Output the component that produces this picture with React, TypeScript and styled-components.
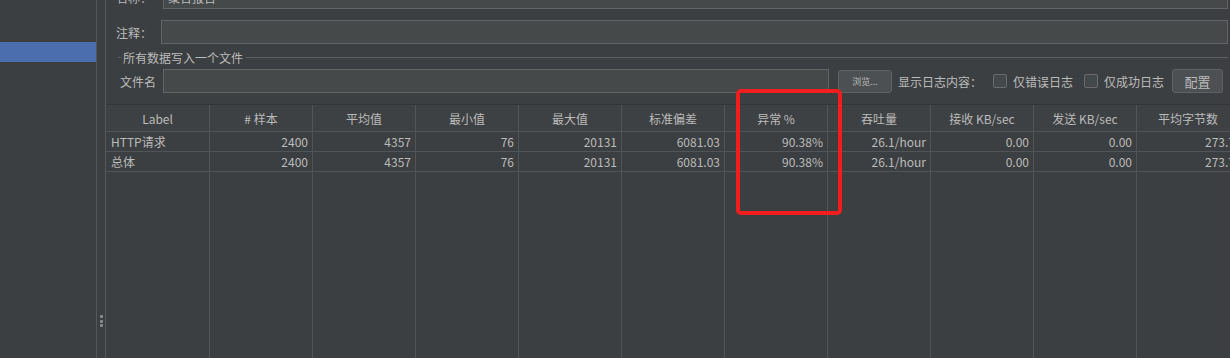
import React from "react";
import styled, { createGlobalStyle } from "styled-components";

const GlobalStyle = createGlobalStyle`
  html, body {
    margin: 0;
    padding: 0;
    background: #3c3f41;
    overflow: hidden;
  }
  * { box-sizing: border-box; }
`;

const FONT = `"Noto Sans CJK SC", "Noto Sans", sans-serif`;

const Root = styled.div`
  position: relative;
  display: flex;
  width: 1230px;
  height: 358px;
  background: #3c3f41;
  color: #bbbbbb;
  font-family: ${FONT};
  font-size: 12px;
  overflow: hidden;
`;

const Sidebar = styled.div`
  width: 97px;
  flex: none;
  border-right: 1px solid #555759;
  padding-top: 42px;
`;

const SelectedItem = styled.div`
  height: 20px;
  background: #4b6eaf;
`;

const Splitter = styled.div`
  width: 8px;
  flex: none;
  display: flex;
  flex-direction: column;
  align-items: center;
  justify-content: flex-end;
  gap: 1.5px;
  padding-bottom: 31px;
`;

const Dot = styled.span`
  width: 3px;
  height: 3px;
  background: #8c8c8c;
  border-radius: 1px;
`;

const Main = styled.div`
  flex: 1;
  min-width: 0;
  border-left: 1px solid #555759;
  display: flex;
  flex-direction: column;
  overflow: hidden;
`;

const Form = styled.div`
  display: flex;
  flex-direction: column;
  padding: 0 2px 0 10px;
`;

const FieldRow = styled.div<{ $top: number; $label: number; $pad?: number }>`
  display: flex;
  align-items: center;
  height: 24px;
  margin-top: ${(p) => p.$top}px;
  & > label {
    width: ${(p) => p.$label}px;
    padding-left: ${(p) => p.$pad ?? 0}px;
    flex: none;
    font-size: 12px;
    white-space: nowrap;
  }
`;

const TextField = styled.div<{ $width?: number }>`
  height: 24px;
  ${(p) => (p.$width ? `width: ${p.$width}px; flex: none;` : "flex: 1;")}
  background: #45494a;
  border: 1px solid #646464;
  padding: 0 4px;
  display: flex;
  align-items: center;
  font-size: 12px;
  color: #bbbbbb;
`;

const GroupTitle = styled.div`
  display: flex;
  align-items: center;
  height: 16px;
  margin-top: 5px;
  padding-left: 2px;
  font-size: 12px;
  &::before {
    content: "";
    width: 3px;
    height: 1px;
    background: #5e6163;
    margin-right: 2px;
  }
  &::after {
    content: "";
    flex: 1;
    height: 1px;
    background: #5e6163;
    margin-left: 3px;
  }
`;

const SmallButton = styled.div`
  width: 54px;
  height: 23px;
  margin-left: 9px;
  flex: none;
  background: #4c5052;
  border: 1px solid #5e6264;
  border-radius: 3px;
  display: flex;
  align-items: center;
  justify-content: center;
  font-size: 9px;
  color: #bbbbbb;
`;

const Button = styled.div`
  width: 51px;
  height: 24px;
  margin-left: auto;
  margin-right: 5px;
  flex: none;
  background: #4c5052;
  border: 1px solid #5e6264;
  border-radius: 3px;
  display: flex;
  align-items: center;
  justify-content: center;
  font-size: 13px;
  color: #bbbbbb;
`;

const InlineText = styled.span<{ $ml: number }>`
  margin-left: ${(p) => p.$ml}px;
  font-size: 12px;
  white-space: nowrap;
`;

const CheckBox = styled.span<{ $ml: number }>`
  width: 14px;
  height: 14px;
  margin-left: ${(p) => p.$ml}px;
  flex: none;
  background: #43494a;
  border: 1px solid #6b6b6b;
  border-radius: 2px;
`;

const Table = styled.div`
  margin-top: 11px;
  flex: 1;
  display: grid;
  grid-template-columns: 104px repeat(10, 103px);
  grid-template-rows: 27px 20px 20px 1fr;
  border-top: 1px solid #333537;
`;

const HeadCell = styled.div`
  display: flex;
  align-items: center;
  justify-content: center;
  background: #3e4143;
  border-right: 1px solid #515557;
  border-bottom: 1px solid #515557;
  font-size: 12px;
  white-space: nowrap;
  overflow: hidden;
`;

const Cell = styled.div<{ $left?: boolean }>`
  display: flex;
  align-items: center;
  justify-content: ${(p) => (p.$left ? "flex-start" : "flex-end")};
  padding: ${(p) => (p.$left ? "0 0 0 5px" : "0 4px 0 0")};
  border-right: 1px solid #515557;
  border-bottom: 1px solid #515557;
  font-size: 12px;
  white-space: nowrap;
  overflow: hidden;
`;

const FillCell = styled.div`
  border-right: 1px solid #515557;
`;

const Highlight = styled.div`
  position: absolute;
  left: 736px;
  top: 89px;
  width: 106px;
  height: 126px;
  border: 4px solid #f21d1d;
  border-radius: 5px;
  pointer-events: none;
`;

const headers = [
  "Label",
  "# 样本",
  "平均值",
  "最小值",
  "最大值",
  "标准偏差",
  "异常 %",
  "吞吐量",
  "接收 KB/sec",
  "发送 KB/sec",
  "平均字节数",
];

const rows = [
  ["HTTP请求", "2400", "4357", "76", "20131", "6081.03", "90.38%", "26.1/hour", "0.00", "0.00", "273.7"],
  ["总体", "2400", "4357", "76", "20131", "6081.03", "90.38%", "26.1/hour", "0.00", "0.00", "273.7"],
];

export default function App() {
  return (
    <Root>
      <GlobalStyle />
      <Sidebar>
        <SelectedItem />
      </Sidebar>
      <Splitter>
        <Dot />
        <Dot />
        <Dot />
      </Splitter>
      <Main>
        <Form>
          <FieldRow $top={-15} $label={47}>
            <label>名称：</label>
            <TextField>聚合报告</TextField>
          </FieldRow>
          <FieldRow $top={11} $label={45}>
            <label>注释：</label>
            <TextField />
          </FieldRow>
          <GroupTitle>所有数据写入一个文件</GroupTitle>
          <FieldRow $top={4} $label={47} $pad={4}>
            <label>文件名</label>
            <TextField $width={666} />
            <SmallButton>浏览...</SmallButton>
            <InlineText $ml={6}>显示日志内容：</InlineText>
            <CheckBox $ml={11} />
            <InlineText $ml={6}>仅错误日志</InlineText>
            <CheckBox $ml={11} />
            <InlineText $ml={6}>仅成功日志</InlineText>
            <Button>配置</Button>
          </FieldRow>
        </Form>
        <Table>
          {headers.map((h) => (
            <HeadCell key={h}>{h}</HeadCell>
          ))}
          {rows.map((r, i) =>
            r.map((v, j) => (
              <Cell key={`${i}-${j}`} $left={j === 0}>
                {v}
              </Cell>
            ))
          )}
          {headers.map((h) => (
            <FillCell key={`f-${h}`} />
          ))}
        </Table>
      </Main>
      <Highlight />
    </Root>
  );
}
